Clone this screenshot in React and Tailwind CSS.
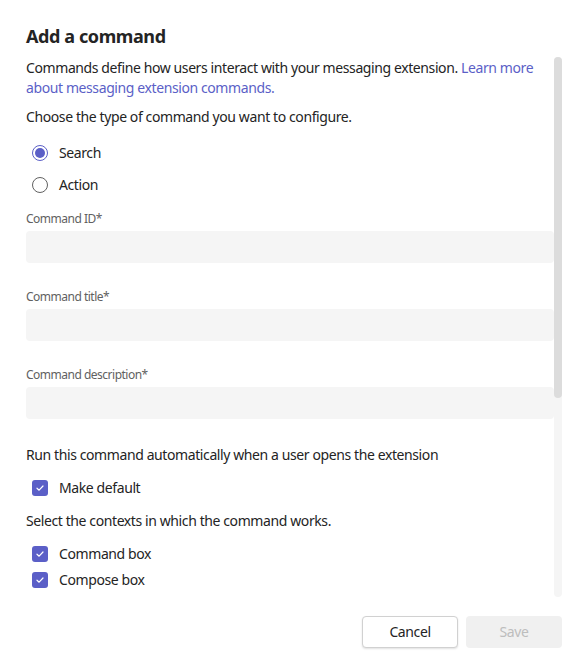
import React, { useState } from 'react';

const font = { fontFamily: '"Segoe UI", "Noto Sans", "Liberation Sans", sans-serif' };

const Radio = ({ label, checked, onClick }) => (
  <button type="button" onClick={onClick} className="flex h-8 items-center gap-[11px] pl-1.5 text-left">
    <span
      className={`flex h-4 w-4 items-center justify-center rounded-full border ${
        checked ? 'border-[#5b5fc7]' : 'border-[#616161]'
      }`}
    >
      {checked && <span className="h-2.5 w-2.5 rounded-full bg-[#5b5fc7]" />}
    </span>
    <span className="text-sm text-[#242424]">{label}</span>
  </button>
);

const Checkbox = ({ label, checked, onClick }) => (
  <button type="button" onClick={onClick} className="flex h-[26px] items-center gap-[11px] pl-1.5 text-left">
    <span
      className={`flex h-4 w-4 items-center justify-center rounded-[3px] ${
        checked ? 'bg-[#5b5fc7]' : 'border border-[#616161] bg-white'
      }`}
    >
      {checked && (
        <svg width="10" height="10" viewBox="0 0 10 10" fill="none">
          <path d="M2 5.2 L4.1 7.2 L8 3" stroke="white" strokeWidth="1.2" strokeLinecap="round" strokeLinejoin="round" />
        </svg>
      )}
    </span>
    <span className="text-sm text-[#242424]">{label}</span>
  </button>
);

const Field = ({ label, className = '' }) => (
  <div className={className}>
    <label className="block text-xs leading-4 tracking-[-0.5px] text-[#616161]">{label}</label>
    <input className="mt-1 block h-8 w-full rounded-[4px] bg-[#f5f5f5] px-3 text-sm outline-none" />
  </div>
);

export default function App() {
  const [type, setType] = useState('search');
  const [checks, setChecks] = useState({ def: true, box: true, compose: true });
  const toggle = (k) => setChecks((p) => ({ ...p, [k]: !p[k] }));

  return (
    <div style={font} className="h-[665px] w-[578px] bg-white pl-[26px] pr-4 tracking-[-0.4px] text-[#242424]">
      <h1 className="pt-[24px] text-lg font-bold leading-6 text-[#242424]">Add a command</h1>

      <div className="mt-[9px] flex h-[540px]">
        <div className="flex-1 overflow-hidden">
          <p className="pt-px text-sm leading-5">
            Commands define how users interact with your messaging extension.{' '}
            <a className="text-[#5b5fc7]" href="#">Learn more about messaging extension commands.</a>
          </p>
          <p className="mt-[9px] text-sm leading-5">Choose the type of command you want to configure.</p>

          <div className="mt-[10px] flex flex-col">
            <Radio label="Search" checked={type === 'search'} onClick={() => setType('search')} />
            <Radio label="Action" checked={type === 'action'} onClick={() => setType('action')} />
          </div>

          <Field label="Command ID*" className="mt-[10px]" />
          <Field label="Command title*" className="mt-[26px]" />
          <Field label="Command description*" className="mt-[26px]" />

          <p className="mt-[26px] text-sm leading-5">Run this command automatically when a user opens the extension</p>
          <div className="mt-[10px]">
            <Checkbox label="Make default" checked={checks.def} onClick={() => toggle('def')} />
          </div>
          <p className="mt-[10px] text-sm leading-5">Select the contexts in which the command works.</p>
          <div className="mt-[10px] flex flex-col">
            <Checkbox label="Command box" checked={checks.box} onClick={() => toggle('box')} />
            <Checkbox label="Compose box" checked={checks.compose} onClick={() => toggle('compose')} />
          </div>
        </div>

        {/* scrollbar */}
        <div className="flex w-2 flex-col rounded-full bg-[#f5f5f5]">
          <div className="h-[341px] rounded-full bg-[#dcdcdc]" />
        </div>
      </div>

      <div className="mt-[19px] flex justify-end gap-2">
        <button
          type="button"
          className="h-8 w-24 rounded-[4px] border border-[#d1d1d1] bg-white text-sm text-[#242424] shadow-[0_1px_2px_rgba(0,0,0,0.12)]"
        >
          Cancel
        </button>
        <button type="button" disabled className="h-8 w-24 rounded-[4px] bg-[#f0f0f0] text-sm text-[#bdbdbd]">
          Save
        </button>
      </div>
    </div>
  );
}
